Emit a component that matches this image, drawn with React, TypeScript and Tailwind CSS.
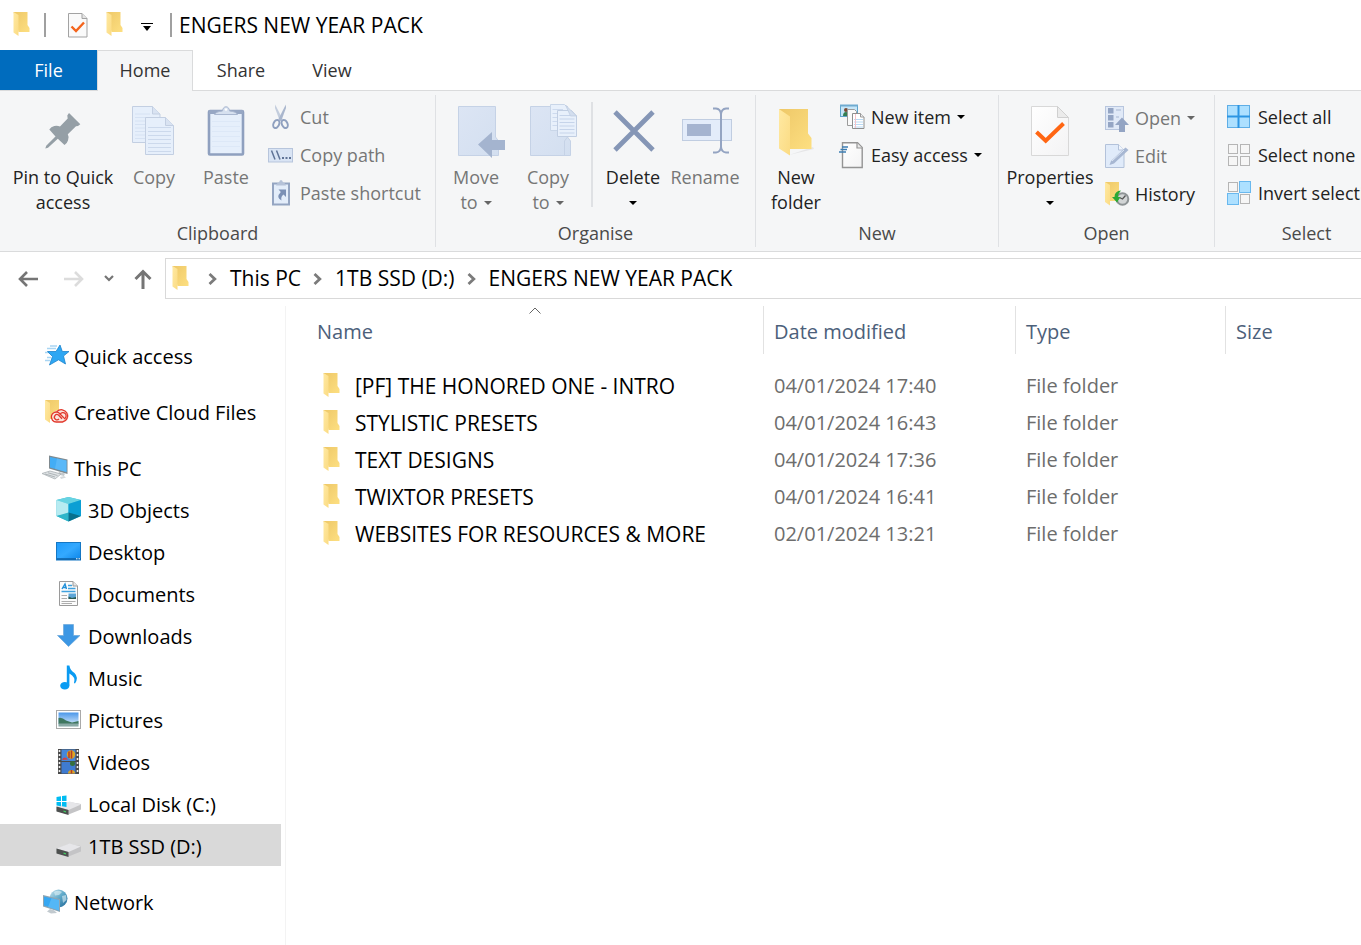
import React, { useState } from 'react';

type IconProps = { className?: string };

/* ---------- shared shapes ---------- */

const Gradients: React.FC = () => (
  <svg width="0" height="0" className="absolute" aria-hidden="true">
    <defs>
      <linearGradient id="folderBack" x1="0" y1="0" x2="1" y2="1">
        <stop offset="0" stopColor="#eec868" />
        <stop offset="1" stopColor="#fddf81" />
      </linearGradient>
      <linearGradient id="folderFlap" x1="0" y1="0" x2="1" y2="1">
        <stop offset="0" stopColor="#ffe9a2" />
        <stop offset="1" stopColor="#fbdb83" />
      </linearGradient>
      <linearGradient id="paleBlue" x1="0" y1="0" x2="1" y2="1">
        <stop offset="0" stopColor="#dce5f4" />
        <stop offset="1" stopColor="#d3dff0" />
      </linearGradient>
      <linearGradient id="screenBlue" x1="0" y1="0" x2="1" y2="1">
        <stop offset="0" stopColor="#1e9bfb" />
        <stop offset="0.5" stopColor="#34a9ff" />
        <stop offset="1" stopColor="#0a84e8" />
      </linearGradient>
      <linearGradient id="whitePaper" x1="0" y1="0" x2="1" y2="1">
        <stop offset="0" stopColor="#ffffff" />
        <stop offset="1" stopColor="#f3f3f4" />
      </linearGradient>
      <linearGradient id="globe" x1="0" y1="0" x2="1" y2="1">
        <stop offset="0" stopColor="#c9e4ee" />
        <stop offset="0.5" stopColor="#5fa9c9" />
        <stop offset="1" stopColor="#1c6596" />
      </linearGradient>
      <linearGradient id="sky" x1="0" y1="0" x2="0" y2="1">
        <stop offset="0" stopColor="#4a97ea" />
        <stop offset="1" stopColor="#e8f4fb" />
      </linearGradient>
    </defs>
  </svg>
);

const Folder: React.FC<IconProps> = ({ className }) => (
  <svg width="18" height="26" viewBox="0 0 18 26" className={className}>
    <path d="M.5 0H14.500V13L16.500 16V20H5.500Z" fill="url(#folderBack)" />
    <path d="M.5 0L5.500 3V24L.5 20.500Z" fill="url(#folderFlap)" />
  </svg>
);

const Caret: React.FC<IconProps> = ({ className }) => (
  <svg width="8" height="4" viewBox="0 0 8 4" className={className}>
    <path d="M0 0H8L4 4Z" fill="currentColor" />
  </svg>
);

const Crumb: React.FC = () => (
  <svg width="9" height="12" viewBox="0 0 9 12" fill="none" stroke="#7b7b7b" strokeWidth="2.8">
    <path d="M1.5 1L6.8 6L1.5 11" />
  </svg>
);

/* ---------- large ribbon icons (50 x 50) ---------- */

const Big: React.FC<{ children: React.ReactNode }> = ({ children }) => (
  <svg width="50" height="50" viewBox="0 0 50 50" className="shrink-0 overflow-visible">{children}</svg>
);

const PinIcon = () => (
  <Big>
    <path d="M31 7L42.3 18.3L40 20L38 20.2L29.8 28.3Q31.4 31 30 34.5Q29 37.500 26.500 39L19.800 32.700L10 41.800L7.300 42.600L8.200 39.800L17.500 30.400L11.300 23.500Q13 20.800 16.300 20Q19.500 19.400 22 20.500L29.700 12.500L29.300 9.500Z" fill="#959fa6" />
  </Big>
);

const CopyIcon = () => (
  <Big>
    <path d="M3.500 .5H23.500L31 8V36.500H3.500Z" fill="#e6effb" stroke="#c3cfe2" />
    <path d="M23.500 .5V8H31" fill="#d9e3f2" stroke="#c3cfe2" />
    <path d="M6 8H21M6 11.500H27M6 15H16M6 18.500H16M6 22H16M6 25.500H16M6 29H16M6 32.500H16" stroke="#d6e2f3" />
    <path d="M16.500 11.500H36.500L44.500 19.500V48.500H16.500Z" fill="#e6effb" stroke="#c3cfe2" />
    <path d="M36.500 11.500V19.500H44.500" fill="#d9e3f2" stroke="#c3cfe2" />
    <path d="M19 21.500H42M19 25.500H42M19 29.500H42M19 33.500H42M19 37.500H42M19 41.500H42M19 45.500H42" stroke="#ccd9ec" />
  </Big>
);

const PasteIcon = () => (
  <Big>
    <rect x="8" y="5" width="34" height="43.500" rx="1" fill="#e6effb" stroke="#8fa0bf" strokeWidth="2.600" />
    <path d="M11 15.500H39M11 20.500H39M11 25.500H39M11 30.500H39M11 35.500H39M11 40.500H39" stroke="#dde8f7" />
    <rect x="8" y="4" width="34" height="4" fill="#97a7c4" />
    <path d="M13.500 8.500Q15 5.500 21.500 5Q22 .8 25 .8Q28 .8 28.500 5Q35 5.500 36.500 8.500Z" fill="#d6e0ef" stroke="#a9b7d0" />
    <circle cx="25" cy="3.500" r="1.200" fill="#fff" />
  </Big>
);

const MoveIcon = () => (
  <Big>
    <path d="M7.500 .5H44.500V31L47.500 35V49.500H7.500Z" fill="url(#paleBlue)" stroke="#c5d2e6" />
    <path d="M27 38.500L41 26V34H54V44H41V52Z" fill="#a4b4cf" />
  </Big>
);

const CopyToIcon = () => (
  <Big>
    <path d="M7.500 .5H44.500V31L47.500 35V49.500H7.500Z" fill="url(#paleBlue)" stroke="#c5d2e6" />
    <path d="M41.500 49.500V35L44.500 31" fill="none" stroke="#c5d2e6" />
    <path d="M27.500 -1.500H41.500L45.500 2.500V24.500H27.500Z" fill="#e8f0fb" stroke="#c9d6e8" />
    <path d="M29.500 3.500H40M29.500 7.500H36M29.500 11.500H34M29.500 15.500H34M29.500 19.500H34" stroke="#cddaee" />
    <path d="M34.500 4.500H48.500L53.500 10V30.500H34.500Z" fill="#e8f0fb" stroke="#c1cee2" />
    <path d="M36.500 9.500H47M36.500 13H51.500M36.500 16.500H51.500M36.500 20H51.500M36.500 23.500H51.500M36.500 27H51.500" stroke="#c6d4ea" />
    <path d="M42.500 -1L53.500 10H47.500Z" fill="#d3deee" stroke="#bccadf" strokeWidth=".7" />
  </Big>
);

const DeleteIcon = () => (
  <Big>
    <path d="M7 6L45 44M45 6L7 44" stroke="#8596b6" strokeWidth="4.800" />
  </Big>
);

const RenameIcon = () => (
  <Big>
    <rect x="2.500" y="13.500" width="49" height="21" fill="#e3ecfa" stroke="#c0cde1" />
    <rect x="7" y="18" width="24" height="12" fill="#a5b4d0" />
    <path d="M33 2.500H36Q40.500 3 41 8V41Q40.500 46 36 46.500H33M49 2.500H46Q41.500 3 41 8V41Q41.500 46 46 46.500H49" fill="none" stroke="#94a4c2" strokeWidth="2" />
  </Big>
);

const NewFolderIcon = () => (
  <Big>
    <path d="M18 49L43 43L42 41Z" fill="#e6e6e8" />
    <path d="M8 3H37V27.500L40.500 32V43H19Z" fill="url(#folderBack)" />
    <path d="M8 3L19 10.500V49.500L8 42.500Z" fill="url(#folderFlap)" />
  </Big>
);

const PropertiesIcon = () => (
  <Big>
    <path d="M6.500 .5H32.500L43.500 11.500V49.500H6.500Z" fill="url(#whitePaper)" stroke="#d8d8d8" />
    <path d="M32.500 .5V11.500H43.500Z" fill="#ebebeb" stroke="#d0d0d0" />
    <path d="M11.500 26L20.700 34.800L38.500 17.500" fill="none" stroke="#ff6613" strokeWidth="4" />
  </Big>
);

/* ---------- small ribbon icons (26 x 26) ---------- */

const Small: React.FC<{ children: React.ReactNode }> = ({ children }) => (
  <svg width="26" height="26" viewBox="0 0 26 26" className="shrink-0 overflow-visible">{children}</svg>
);

const CutIcon = () => (
  <Small>
    <path d="M7.200 .5L14.500 15L12 17.500L7 4Z" fill="#c3cddd" />
    <path d="M17.800 .5L10.500 15L13 17.500L18 4Z" fill="#a9b6cd" />
    <ellipse cx="8.300" cy="20" rx="2.800" ry="4.200" transform="rotate(25 8.300 20)" fill="none" stroke="#8fa0bf" strokeWidth="2" />
    <ellipse cx="16.700" cy="20" rx="2.800" ry="4.200" transform="rotate(-25 16.700 20)" fill="none" stroke="#8fa0bf" strokeWidth="2" />
  </Small>
);

const CopyPathIcon = () => (
  <Small>
    <rect x=".5" y="6.500" width="24" height="13.500" fill="#d9e4f4" stroke="#b7c5dc" />
    <path d="M3.500 8.500L7 17.500M8.500 8.500L12 17.500" stroke="#5f7396" strokeWidth="1.500" />
    <path d="M14 16H16M17.500 16H19.500M21 16H23" stroke="#5f7396" strokeWidth="2" />
  </Small>
);

const PasteShortcutIcon = () => (
  <Small>
    <rect x="5" y="3.500" width="16" height="21" fill="#e3edfa" stroke="#94a5c2" strokeWidth="2" />
    <path d="M8 5.500Q9 2.500 11 2.500Q11.500 0 13 0Q14.500 0 15 2.500Q17 2.500 18 5.500Z" fill="#b5c2d8" />
    <path d="M10.500 9.500H18V17L15.500 14.500Q12.500 16.500 13.500 20.500Q7.500 17.500 12.800 12Z" fill="#7b90b5" />
  </Small>
);

const NewItemIcon = () => (
  <Small>
    <rect x="1.500" y="1.500" width="17" height="11" fill="#c6e6f8" stroke="#5ea3cc" />
    <path d="M1 1.500H19" stroke="#6fabd0" strokeWidth="2" />
    <circle cx="7" cy="6" r="2" fill="#7b4a35" />
    <path d="M4 12Q4 8 7 8Q10 8 10 12Z" fill="#347d51" />
    <path d="M8.500 5.500H15.500L17.500 7.500V21.500H8.500Z" fill="#fafafa" stroke="#9b9b9b" />
    <path d="M13.500 9.500H21.500L25 13V24.500H13.500Z" fill="#fff" stroke="#8f8f8f" />
    <path d="M21.500 9.500V13H25" fill="#eee" stroke="#999" />
    <path d="M15 15.500H24M15 18H24M15 20.500H24M15 23H24" stroke="#b8d9f4" />
    <path d="M16.500 10V24" stroke="#f7c3c9" />
  </Small>
);

const EasyAccessIcon = () => (
  <Small>
    <path d="M3.500 .8H18.500L23.200 5.500V25.500H3.500Z" fill="url(#whitePaper)" stroke="#949494" strokeWidth="1.400" />
    <path d="M18 1V6H23" fill="#e9e9e9" stroke="#949494" strokeWidth="1.200" />
    <path d="M3 5H9M1.500 7.500H8M0 10H7" stroke="#3c7eb3" strokeWidth="1.500" />
  </Small>
);

const OpenIcon = () => (
  <Small>
    <rect x="2.500" y="1.500" width="18" height="23" fill="#e0e9f7" stroke="#b8c6de" />
    <rect x="5" y="3" width="5.500" height="5.500" fill="#94a5c4" />
    <rect x="5" y="10" width="5.500" height="5.500" fill="#94a5c4" />
    <rect x="5" y="17" width="5.500" height="5.500" fill="#94a5c4" />
    <path d="M13 5H18M13 12H16" stroke="#a8b7d1" />
    <path d="M19 12.500L26 20H22V27H16V20H12Z" fill="#94a5c4" />
  </Small>
);

const EditIcon = () => (
  <Small>
    <path d="M2.500 1.500H15.500L21 7V24.500H2.500Z" fill="#e0ebfa" stroke="#b3c2da" />
    <path d="M15.500 1.500V7H21" fill="#f1f6fd" stroke="#b3c2da" />
    <path d="M6.500 22L8 18L22.500 4.500L25.500 7L11 20.500Z" fill="#a7b7d2" />
    <path d="M9 18L21 7" stroke="#dbe5f4" />
  </Small>
);

const HistoryIcon = () => (
  <Small>
    <path d="M2 1H16V14L18 17V20H7Z" fill="url(#folderBack)" />
    <path d="M2 1L7 4V24.500L2 21Z" fill="url(#folderFlap)" />
    <circle cx="19.500" cy="18" r="5.800" fill="#d2d5d6" stroke="#8d9395" strokeWidth="2" />
    <path d="M22.500 14.500L19.500 18L16.500 16.500" fill="none" stroke="#555" strokeWidth="1.300" />
    <path d="M18 9.500Q11.500 10 11.500 16H9L14 21.500L17.500 16H15Q15 12.500 18 9.500Z" fill="#2aa836" />
  </Small>
);

const blueCell = { fill: '#ade0ff', stroke: '#69b8ee' };
const greyCell = { fill: '#f6f6f6', stroke: '#b5b5b5' };

const Cells: React.FC<{ on: boolean[] }> = ({ on }) => (
  <Small>
    {[[2.5, 2.5], [14.5, 2.5], [2.5, 14.5], [14.5, 14.5]].map(([x, y], i) => (
      <rect key={i} x={on[i] ? x - 1 : x} y={on[i] ? y - 1 : y} width={on[i] ? 11 : 9} height={on[i] ? 11 : 9} {...(on[i] ? blueCell : greyCell)} />
    ))}
  </Small>
);

const SelectAllIcon = () => (
  <Small>
    <rect x="1.500" y="1.500" width="22" height="22" fill="#ade0ff" stroke="#5faee6" />
    <path d="M12.500 1V24M1 12.500H24" stroke="#2c95e3" strokeWidth="2" />
  </Small>
);
const SelectNoneIcon = () => <Cells on={[false, false, false, false]} />;
const InvertIcon = () => <Cells on={[false, true, true, false]} />;

/* ---------- navigation pane icons (28 x 28) ---------- */

const Nav: React.FC<{ children: React.ReactNode }> = ({ children }) => (
  <svg width="28" height="28" viewBox="0 0 28 28" className="shrink-0 overflow-visible">{children}</svg>
);

const StarIcon = () => (
  <Nav>
    <path d="M8 4H15M5 6.500H14M3 10.500H8M5 15.500H9M3 18.500H8" stroke="#a9d5f3" strokeWidth="1.300" />
    <path d="M18 3L20.300 9.500H27L21.500 14L23.500 22L16.500 17.800L7.500 23L10.500 14.500L5.500 9.500H14Z" fill="#2ea7f3" stroke="#1c83cd" strokeWidth=".8" />
  </Nav>
);

const CloudFolderIcon = () => (
  <Nav>
    <path d="M3 2H17V14L19 17V21H8Z" fill="url(#folderBack)" />
    <path d="M3 2L8 5V25L3 21.500Z" fill="url(#folderFlap)" />
    <ellipse cx="18.500" cy="18" rx="8.500" ry="6.200" fill="#f9e5dd" />
    <g fill="none" stroke="#e2372b" strokeWidth="1.300">
      <path d="M15 13.500A6.200 6.200 0 1 1 20.500 24H14.500A5 5 0 1 1 16.500 14.500L22 20" />
      <path d="M22 20.800A3.200 3.200 0 1 0 18 16.500" />
      <path d="M17 20.800A2.600 2.600 0 1 1 16.500 17L20 20.800" />
    </g>
  </Nav>
);

const PcIcon = () => (
  <Nav>
    <path d="M7 1.500L25.500 5.500V20L7 14.500Z" fill="#7f8a90" />
    <path d="M8 3L24.500 6.500V18L8 13.500Z" fill="#43adf5" />
    <path d="M15 4.500L24.500 6.500V18L13 14.800Z" fill="#6bc0fa" opacity=".6" />
    <path d="M17 18L23 19.500L22 22L16 20.500Z" fill="#c3c9cc" />
    <path d="M0 19.500L8 17L19 20L13 25Z" fill="#dfe3e5" stroke="#a9b0b4" strokeWidth=".8" />
    <path d="M3 20L13 23M6 18.800L15.500 21.500" stroke="#a0a7ab" strokeWidth=".8" />
    <path d="M18 23L22 22L24 23.500L19 25Z" fill="#d6d9db" />
  </Nav>
);

const CubeIcon = () => (
  <Nav>
    <path d="M.5 4L12.500 1L25 4V20L12.500 25.500L.5 20Z" fill="#3cc0d6" />
    <path d="M.5 4L12.500 1L25 4L12.500 8Z" fill="#67d3e2" />
    <path d="M.5 4L12.500 8V18L.5 20Z" fill="#b7ebf1" />
    <path d="M25 4L12.500 8V18L25 20Z" fill="#0b9fd4" />
    <path d="M.5 20L12.500 16.500V25.500Z" fill="#2fb5c9" />
    <path d="M25 20L12.500 16.500V25.500Z" fill="#08708d" />
  </Nav>
);

const DesktopIcon = () => (
  <Nav>
    <rect x=".5" y="4.500" width="24" height="17.500" fill="url(#screenBlue)" stroke="#1577c4" />
    <path d="M1 21H25" stroke="#0d5fa3" strokeWidth="1.500" />
    <path d="M20 20.800H21.500M22.500 20.800H24" stroke="#fff" />
  </Nav>
);

const DocumentsIcon = () => (
  <Nav>
    <path d="M3.500 1.500H17L21.500 6V25.500H3.500Z" fill="#fcfcfc" stroke="#9a9a9a" />
    <path d="M17 1.500V6H21.500" fill="#e5e5e5" stroke="#9a9a9a" />
    <path d="M6 9L9 4L10.500 9M7 7.500H10" stroke="#2290d9" strokeWidth="1.400" fill="none" />
    <path d="M12 5.500H16M12 8.500H19.500M5.500 11.500H19.500" stroke="#3fa1de" strokeWidth="1.300" />
    <path d="M5.500 15.500H11M5.500 18.500H11M5.500 21.500H19.500M5.500 23.500H16" stroke="#adadad" />
    <rect x="12.500" y="13.500" width="7.500" height="5.500" fill="#5da5d7" />
    <path d="M12.500 19V16.500L16 18L20 17V19Z" fill="#2b5b52" />
  </Nav>
);

const DownloadsIcon = () => (
  <Nav>
    <path d="M7.500 2.500H17.500V13.500H24L12.500 24.500L1.500 13.500H7.500Z" fill="#3c97e4" stroke="#6aa7da" strokeWidth=".7" />
  </Nav>
);

const MusicIcon = () => (
  <Nav>
    <ellipse cx="8.800" cy="21.800" rx="4.600" ry="3.800" fill="#0a9bf2" />
    <path d="M10.800 1.500H13.400Q14 6 18.500 9Q23 13.500 19 19.500L18 19Q20 13 13.400 9.500V21.500H10.800Z" fill="#0a9bf2" />
  </Nav>
);

const PicturesIcon = () => (
  <Nav>
    <rect x=".5" y="4.500" width="24" height="18" fill="#fff" stroke="#a9a9a9" />
    <rect x="2.500" y="6.500" width="20" height="14" fill="url(#sky)" />
    <path d="M2.500 12Q6 11 10 14.500L16 16.500L22.500 15V18H2.500Z" fill="#3f7760" />
    <path d="M2.500 17.500H22.500V20.500H2.500Z" fill="#89a9a5" />
  </Nav>
);

const VideosIcon = () => (
  <Nav>
    <rect x="2" y="1" width="21" height="25" fill="#4a4a4a" />
    <path d="M3.500 2V25M21.500 2V25" stroke="#eee" strokeWidth="1.600" strokeDasharray="2 2" />
    <rect x="5.500" y="1.500" width="14" height="11.500" fill="#4687da" />
    <rect x="5.500" y="14" width="14" height="11.500" fill="#3f7bd0" />
    <circle cx="15" cy="6.500" r="4.200" fill="#dda423" />
    <path d="M13 3.500V10M15.500 2.500V10.500" stroke="#b53a26" strokeWidth="1.500" />
    <path d="M6 12Q8 7.500 12 11.500Z" fill="#d34141" />
    <circle cx="16.500" cy="15.500" r="2.500" fill="#356f3c" />
    <path d="M12 25.500A3.500 3.500 0 0 1 19 25.500Z" fill="#dda423" />
    <path d="M15.500 22V25.500" stroke="#b53a26" strokeWidth="1.500" />
  </Nav>
);

const DriveBody = () => (
  <>
    <path d="M.5 17L13 12L25 14V19.500L12.500 24.500L.5 21Z" fill="#c4c4c6" />
    <path d="M.5 16.500L13.500 11.500L25 14.500L12.500 20Z" fill="#e6e6e9" />
    <path d="M.5 16.500L12.500 20V25L.5 21.500Z" fill="#4d504f" />
    <path d="M7.500 20.500L10 21.300V22.500L7.500 21.800Z" fill="#42d063" />
  </>
);

const LocalDiskIcon = () => (
  <Nav>
    <DriveBody />
    <path d="M.5 7L5 6.300V11H.5ZM6 6.100L10.500 5.500V11H6ZM.5 12H5V16.200L.5 15.600ZM6 12H10.500V17L6 16.300Z" fill="#00bcf2" />
  </Nav>
);

const DriveIcon = () => <Nav><DriveBody /></Nav>;

const NetworkIcon = () => (
  <Nav>
    <circle cx="16.500" cy="10.500" r="9" fill="url(#globe)" />
    <path d="M12 4Q16 1.500 20 4L17 7L13 7.500ZM20 8L24 7L24.500 12L21 15Z" fill="#e0f1f6" opacity=".6" />
    <path d="M1 7L18 11V24L1 18.500Z" fill="#8fa5b2" />
    <path d="M2 8.500L17 12V22.500L2 17.500Z" fill="#36a7f2" />
    <path d="M9.500 10.300L17 12V22.500L6 19Z" fill="#69c1f9" opacity=".6" />
    <path d="M8 21L12 22.200L15 25L9 25.500L5 23.500Z" fill="#c2cacf" />
  </Nav>
);

/* ---------- ribbon building blocks ---------- */

type BigButtonProps = {
  icon: React.ReactNode;
  lines: string[];
  caret?: boolean;
  disabled?: boolean;
  className?: string;
};

const BigButton: React.FC<BigButtonProps> = ({ icon, lines, caret, disabled, className = 'w-[72px]' }) => (
  <button
    type="button"
    disabled={disabled}
    className={`flex shrink-0 flex-col items-center whitespace-nowrap pt-2 text-[#222] disabled:text-[#767676] ${className}`}
  >
    {icon}
    <span className="mt-[9px] leading-[25px]">{lines[0]}</span>
    <span className="flex h-[25px] items-center gap-[6px] leading-[25px]">
      {lines[1]}
      {caret && <Caret className={disabled ? 'text-[#666]' : 'text-black'} />}
    </span>
  </button>
);

type SmallButtonProps = { icon: React.ReactNode; label: string; caret?: boolean; disabled?: boolean };

const SmallButton: React.FC<SmallButtonProps> = ({ icon, label, caret, disabled }) => (
  <button
    type="button"
    disabled={disabled}
    className="flex h-[38px] items-center gap-[6px] whitespace-nowrap text-[#222] disabled:text-[#767676]"
  >
    {icon}
    <span>{label}</span>
    {caret && <Caret className={disabled ? 'text-[#666]' : 'text-black'} />}
  </button>
);

type GroupProps = { title: string; className: string; children: React.ReactNode };

const Group: React.FC<GroupProps> = ({ title, className, children }) => (
  <section aria-label={title} className={`my-1 flex shrink-0 flex-col border-r border-[#dfe1e4] ${className}`}>
    <div className="flex h-[127px] pl-1 pt-[3px]">{children}</div>
    <div className="text-center leading-[28px] text-[#4a4a4a]">{title}</div>
  </section>
);

const Ribbon: React.FC = () => (
  <div className="flex h-[162px] overflow-hidden border-y border-[#dadbdc] bg-[#f5f6f7] text-[18px]">
    <Group title="Clipboard" className="w-[436px]">
      <BigButton icon={<PinIcon />} lines={['Pin to Quick', 'access']} className="ml-1 w-[110px]" />
      <BigButton icon={<CopyIcon />} lines={['Copy']} disabled />
      <BigButton icon={<PasteIcon />} lines={['Paste']} disabled />
      <div className="ml-[6px] flex flex-col">
        <SmallButton icon={<CutIcon />} label="Cut" disabled />
        <SmallButton icon={<CopyPathIcon />} label="Copy path" disabled />
        <SmallButton icon={<PasteShortcutIcon />} label="Paste shortcut" disabled />
      </div>
    </Group>
    <Group title="Organise" className="w-[320px]">
      <BigButton icon={<MoveIcon />} lines={['Move', 'to']} caret disabled />
      <BigButton icon={<CopyToIcon />} lines={['Copy', 'to']} caret disabled />
      <div className="mb-3 ml-[7px] mr-1 mt-1 w-[2px] shrink-0 bg-[#dfe1e4]" />
      <BigButton icon={<DeleteIcon />} lines={['Delete']} caret />
      <BigButton icon={<RenameIcon />} lines={['Rename']} disabled />
    </Group>
    <Group title="New" className="w-[243px]">
      <BigButton icon={<NewFolderIcon />} lines={['New', 'folder']} />
      <div className="ml-[7px] flex flex-col">
        <SmallButton icon={<NewItemIcon />} label="New item" caret />
        <SmallButton icon={<EasyAccessIcon />} label="Easy access" caret />
      </div>
    </Group>
    <Group title="Open" className="w-[216px]">
      <BigButton icon={<PropertiesIcon />} lines={['Properties']} caret className="w-[94px]" />
      <div className="ml-[6px] flex flex-col pt-px">
        <SmallButton icon={<OpenIcon />} label="Open" caret disabled />
        <SmallButton icon={<EditIcon />} label="Edit" disabled />
        <SmallButton icon={<HistoryIcon />} label="History" />
      </div>
    </Group>
    <Group title="Select" className="w-[184px]">
      <div className="ml-[7px] flex flex-col">
        <SmallButton icon={<SelectAllIcon />} label="Select all" />
        <SmallButton icon={<SelectNoneIcon />} label="Select none" />
        <SmallButton icon={<InvertIcon />} label="Invert selection" />
      </div>
    </Group>
  </div>
);

/* ---------- data ---------- */

const tabs = ['Home', 'Share', 'View'];

const crumbs = ['This PC', '1TB SSD (D:)', 'ENGERS NEW YEAR PACK'];

const navGroups = [
  { label: 'Quick access', icon: <StarIcon />, children: [] },
  { label: 'Creative Cloud Files', icon: <CloudFolderIcon />, children: [] },
  {
    label: 'This PC',
    icon: <PcIcon />,
    children: [
      { label: '3D Objects', icon: <CubeIcon /> },
      { label: 'Desktop', icon: <DesktopIcon /> },
      { label: 'Documents', icon: <DocumentsIcon /> },
      { label: 'Downloads', icon: <DownloadsIcon /> },
      { label: 'Music', icon: <MusicIcon /> },
      { label: 'Pictures', icon: <PicturesIcon /> },
      { label: 'Videos', icon: <VideosIcon /> },
      { label: 'Local Disk (C:)', icon: <LocalDiskIcon /> },
      { label: '1TB SSD (D:)', icon: <DriveIcon /> },
    ],
  },
  { label: 'Network', icon: <NetworkIcon />, children: [] },
];

const files = [
  { name: '[PF] THE HONORED ONE - INTRO', date: '04/01/2024 17:40' },
  { name: 'STYLISTIC PRESETS', date: '04/01/2024 16:43' },
  { name: 'TEXT DESIGNS', date: '04/01/2024 17:36' },
  { name: 'TWIXTOR PRESETS', date: '04/01/2024 16:41' },
  { name: 'WEBSITES FOR RESOURCES & MORE', date: '02/01/2024 13:21' },
];

/* ---------- page ---------- */

const App: React.FC = () => {
  const [tab, setTab] = useState('Home');
  const [place, setPlace] = useState('1TB SSD (D:)');

  const navClass = (label: string) =>
    `mr-1 flex h-[42px] items-center gap-1 whitespace-nowrap pt-[2px] ${place === label ? 'bg-[#d9d9d9]' : ''}`;

  return (
    <div className="flex min-h-screen flex-col bg-white font-['Open_Sans','Noto_Sans',sans-serif] text-[20px] text-black">
      <Gradients />

      {/* title bar */}
      <header className="flex h-[50px] items-center pl-[13px]">
        <Folder />
        <div className="ml-[13px] h-6 w-[2px] bg-[#a0a0a0]" />
        <button type="button" aria-label="Properties" className="ml-[21px]">
          <svg width="22" height="26" viewBox="0 0 22 26">
            <path d="M1.500 1.500H15L20 6.500V25H1.500Z" fill="#fafafa" stroke="#a3a3a3" />
            <path d="M15 1.500V6.500H20" fill="#e5e5e5" stroke="#a3a3a3" />
            <path d="M4.500 14.500L9 19L17 10.500" fill="none" stroke="#f4641c" strokeWidth="2.400" />
          </svg>
        </button>
        <button type="button" aria-label="New folder" className="ml-[17px]">
          <Folder />
        </button>
        <button type="button" aria-label="Customise toolbar" className="ml-[17px]">
          <svg width="12" height="8" viewBox="0 0 12 8" className="mt-1">
            <path d="M0 .5H12" stroke="#000" />
            <path d="M2 3H10L6 8Z" />
          </svg>
        </button>
        <div className="ml-[17px] h-6 w-[2px] bg-[#a0a0a0]" />
        <h1 className="ml-[7px] whitespace-nowrap pt-[2px] text-[21px]">ENGERS NEW YEAR PACK</h1>
      </header>

      {/* ribbon tabs, the open one covers the ribbon's top line */}
      <nav className="z-10 -mb-px flex h-[41px] text-[18px] text-[#333]">
        <button type="button" className="mb-px w-[97px] bg-[#006cbe] text-white">File</button>
        {tabs.map((t) => (
          <button
            key={t}
            type="button"
            onClick={() => setTab(t)}
            className={`border-x border-t pb-[2px] ${t === 'View' ? 'w-[86px]' : 'w-24'} ${
              tab === t ? 'border-[#dadbdc] bg-[#f5f6f7]' : 'border-transparent'
            }`}
          >
            {t}
          </button>
        ))}
      </nav>

      <Ribbon />

      {/* address bar */}
      <div className="flex items-center pt-[6px]">
        <button type="button" aria-label="Back" className="flex w-[46px] justify-center pl-[10px]">
          <svg width="20" height="16" viewBox="0 0 20 16" fill="none" stroke="#757575" strokeWidth="2.600">
            <path d="M20 8H2M9 1L2 8L9 15" />
          </svg>
        </button>
        <button type="button" aria-label="Forward" className="ml-[5px] flex w-[46px] justify-center" disabled>
          <svg width="20" height="16" viewBox="0 0 20 16" fill="none" stroke="#dcdcdc" strokeWidth="2.600">
            <path d="M0 8H18M11 1L18 8L11 15" />
          </svg>
        </button>
        <button type="button" aria-label="Recent locations" className="flex w-6 justify-center">
          <svg width="10" height="7" viewBox="0 0 10 7" fill="none" stroke="#757575" strokeWidth="2.200">
            <path d="M1 1L5 5L9 1" />
          </svg>
        </button>
        <button type="button" aria-label="Up" className="flex w-11 justify-center">
          <svg width="18" height="20" viewBox="0 0 18 20" fill="none" stroke="#757575" strokeWidth="3">
            <path d="M9 20V3M1.500 10L9 2.500L16.500 10" />
          </svg>
        </button>
        <div className="flex h-[41px] flex-1 items-center border-y border-l border-[#d9d9d9] pl-[6px]">
          <Folder className="mr-[6px]" />
          {crumbs.map((c) => (
            <div key={c} className="ml-3 flex items-center gap-[13px] text-[21px]">
              <Crumb />
              <a href="#" className="whitespace-nowrap pt-px">{c}</a>
            </div>
          ))}
        </div>
      </div>

      <div className="mt-[7px] flex flex-1">
        <aside className="w-[286px] shrink-0 border-r border-[#f3f3f3] pt-7">
          <ul className="flex flex-col gap-[14px]">
            {navGroups.map((g) => (
              <li key={g.label}>
                <a href="#" onClick={() => setPlace(g.label)} className={`${navClass(g.label)} pl-[42px]`}>
                  {g.icon}
                  <span className="pt-[2px]">{g.label}</span>
                </a>
                {g.children.length > 0 && (
                  <ul>
                    {g.children.map((c) => (
                      <li key={c.label}>
                        <a href="#" onClick={() => setPlace(c.label)} className={`${navClass(c.label)} pl-14`}>
                          {c.icon}
                          <span className="pt-[2px]">{c.label}</span>
                        </a>
                      </li>
                    ))}
                  </ul>
                )}
              </li>
            ))}
          </ul>
        </aside>

        <main className="min-w-0 flex-1">
          <table className="w-full table-fixed border-separate border-spacing-0 whitespace-nowrap text-left">
            <colgroup>
              <col className="w-[477px]" />
              <col className="w-[252px]" />
              <col className="w-[210px]" />
              <col />
            </colgroup>
            <thead>
              <tr className="h-12 text-[#4c607a]">
                <th className="relative p-0 pl-[31px] pt-1 font-normal">
                  Name
                  <svg width="12" height="7" viewBox="0 0 12 7" fill="none" stroke="#666" className="absolute left-[243px] top-px">
                    <path d="M.5 6.500L6 1L11.500 6.500" />
                  </svg>
                </th>
                <th className="border-l border-[#e2e2e2] p-0 pl-[10px] pt-1 font-normal">Date modified</th>
                <th className="border-l border-[#e2e2e2] p-0 pl-[10px] pt-1 font-normal">Type</th>
                <th className="border-l border-[#e2e2e2] p-0 pl-[10px] pt-1 font-normal">Size</th>
              </tr>
            </thead>
            <tbody className="before:block before:h-[13px] before:content-['']">
              {files.map((f) => (
                <tr key={f.name} className="h-[37px] text-[#6d6d6d]">
                  <td className="p-0 pl-[37px]">
                    <span className="flex items-center gap-[14px] text-black">
                      <Folder />
                      <span className="text-[21px] leading-[30px]">{f.name}</span>
                    </span>
                  </td>
                  <td className="p-0 pl-[11px]">{f.date}</td>
                  <td className="p-0 pl-[11px]">File folder</td>
                  <td className="p-0 pl-[11px]" />
                </tr>
              ))}
            </tbody>
          </table>
        </main>
      </div>
    </div>
  );
};

export default App;
